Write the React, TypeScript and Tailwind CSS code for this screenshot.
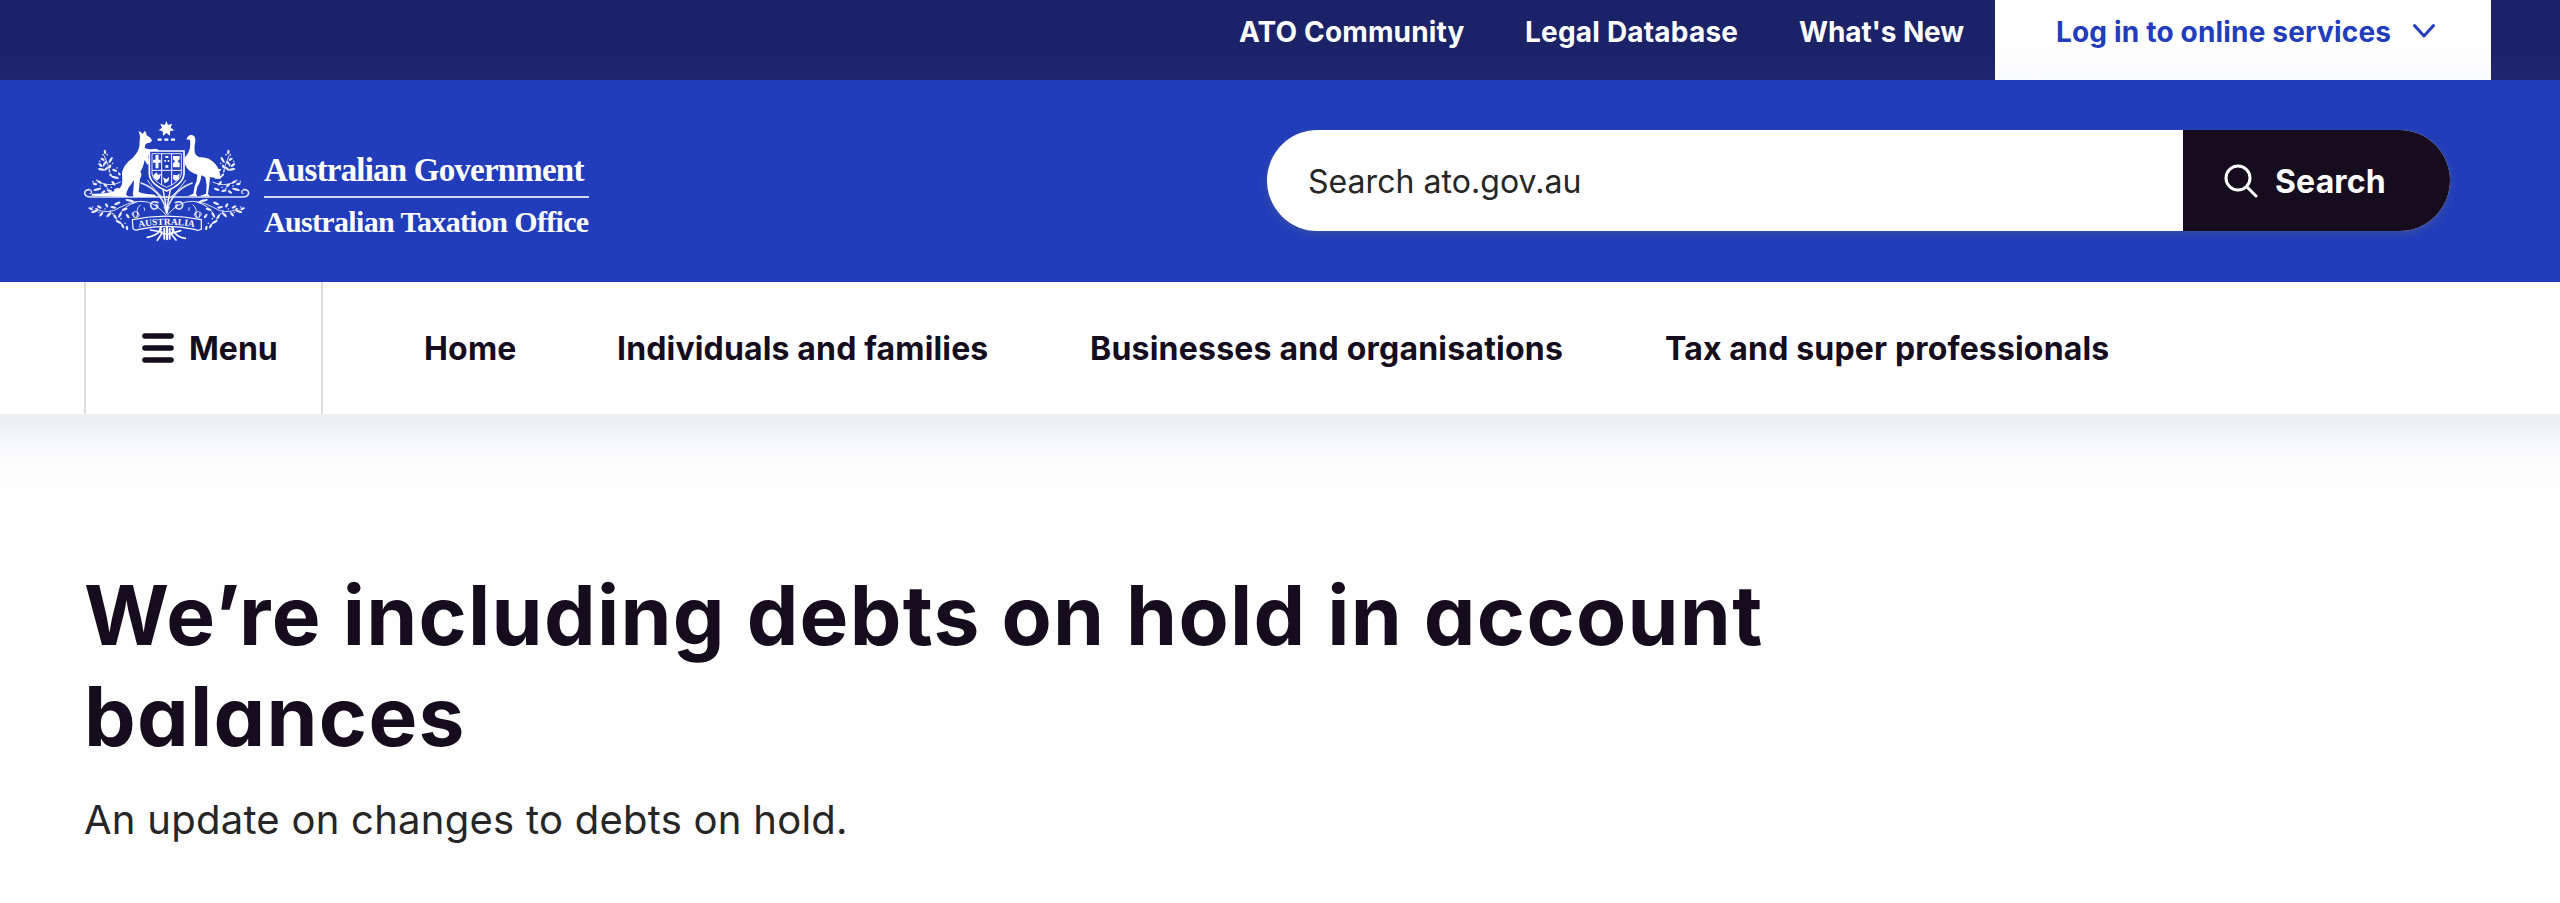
import { ReactNode } from 'react';

const LINKS = [
  { label: 'Home', cls: 'w-[193px] tracking-[0.2px]' },
  { label: 'Individuals and families', cls: 'w-[473px] tracking-[0.16px]' },
  { label: 'Businesses and organisations', cls: 'w-[575px] tracking-[0.22px]' },
  { label: 'Tax and super professionals', cls: 'w-[450px] tracking-[0.16px]' },
];

// [x, y, rotation, length] of each wattle leaf, left half only
const LEAVES: [number, number, number, number][] = [
  [135, 156, 80, 7], [152, 180, -60, 10], [128, 178, 30, 7], [121, 195, 40, 8],
  [135, 190, -50, 8], [124, 208, 10, 10], [139, 206, -40, 8], [150, 199, -70, 6],
  [164, 211, 20, 8], [165, 232, 15, 12], [152, 225, 50, 5], [178, 222, 60, 5],
  [118, 246, 30, 8], [105, 252, 15, 7], [112, 268, -15, 12], [136, 256, 40, 7],
  [130, 276, -30, 7], [148, 272, 10, 8], [160, 250, 50, 8], [170, 268, -20, 9],
  [92, 326, 20, 7], [104, 334, -20, 11], [118, 321, 30, 8], [124, 343, -50, 8],
  [140, 316, 60, 7], [147, 344, -45, 10], [160, 322, 10, 9], [172, 310, -25, 10],
  [165, 350, 60, 8], [180, 345, -60, 9], [176, 366, 30, 10], [188, 378, 60, 8],
  [201, 384, 80, 7], [203, 348, 55, 8], [194, 328, -15, 9], [210, 302, 15, 14],
];

const BERRIES: [number, number][] = [
  [129, 164], [142, 164], [131, 197], [119, 184], [158, 190], [147, 213], [171, 204],
  [110, 241], [99, 245], [121, 258], [142, 265], [154, 262], [98, 321], [111, 326],
  [117, 337], [135, 327], [151, 333], [158, 341], [170, 357], [183, 356], [195, 370],
];

function Foliage() {
  return (
    <g>
      {LEAVES.map(([x, y, angle, rx], i) => (
        <ellipse key={i} cx={x} cy={y} rx={rx} ry={3.6} transform={`rotate(${angle} ${x} ${y})`} fillOpacity={0.9} />
      ))}
      {BERRIES.map(([x, y], i) => (
        <circle key={i} cx={x} cy={y} r={2.5} fillOpacity={0.8} />
      ))}
      <g fill="none" stroke="white" strokeWidth={3} strokeOpacity={0.85}>
        <path d="M132 166 Q146 195 150 218 M116 246 Q150 262 182 246" />
        <path d="M105 326 Q145 346 180 322 Q225 298 262 306 Q292 314 318 345" />
        <path d="M178 346 Q190 318 230 306" />
        <path d="M242 248 Q280 262 300 290 Q316 312 321 340" strokeWidth={5} />
        <path d="M262 240 Q290 280 320 300" strokeWidth={3} />
        <path d="M296 308 Q272 300 272 317 Q276 332 290 325 Q298 316 286 314" strokeWidth={5} />
        <path d="M216 340 q8 -10 18 -2 q8 10 -4 14 q-12 2 -14 -12 M222 352 l-2 -14 M230 352 l4 -16" />
        <path d="M234 346 Q226 326 242 314 M252 322 l2 10" />
        <path d="M91 269 Q74 268 74 280 Q77 292 94 291 L322 291" strokeWidth={5} />
        <path d="M92 270 Q99 280 89 281" strokeWidth={4} />
      </g>
    </g>
  );
}

function Crest() {
  return (
    <svg viewBox="66 60 504 366" className="h-[122px] w-[168px] shrink-0" fill="white">
      {/* star and wreath */}
      <path d="M319 63 L324 75 L336 71 L332 83 L343 91 L330 94 L330 107 L319 99 L309 108 L308 94 L296 91 L306 83 L301 71 L314 75 Z" />
      <path d="M293 119h52" stroke="white" strokeWidth={7} strokeDasharray="12 8" />
      <Foliage />
      <g transform="matrix(-1 0 0 1 640 0)">
        <Foliage />
      </g>
      {/* kangaroo */}
      <path d="M236 93 Q244 96 248 102 L254 92 Q260 98 260 106 Q271 110 276 121 Q273 130 260 130 Q254 134 254 144 Q268 150 280 147 Q292 144 298 152 L272 157 Q264 164 264 172 L270 190 L262 194 L254 180 Q250 202 241 215 Q248 224 240 236 L236 276 Q252 282 284 284 L290 291 L222 290 Q216 284 220 272 L222 240 Q212 254 204 266 L198 283 L206 291 L120 288 L94 287 L96 281 Q152 282 178 266 Q190 256 186 226 Q184 206 206 184 Q232 164 238 140 L240 108 Z" />
      {/* emu */}
      <path d="M379 118 Q384 105 394 104 Q407 106 406 122 Q402 142 404 156 Q406 168 420 172 Q446 170 464 190 Q480 206 482 238 Q466 232 450 232 L448 252 L444 282 L450 289 L418 289 L438 281 L440 256 L436 232 L424 226 Q422 248 412 260 L408 280 L412 289 L384 288 L400 281 L404 258 Q412 244 412 224 Q384 216 376 196 Q368 176 380 166 Q394 148 390 120 Z" />
      {/* shield */}
      <path d="M268 153 H372 V222 Q370 252 320 273 Q270 252 268 222 Z" fill="#213dbc" stroke="white" strokeWidth={5} />
      <path d="M276 161 H364 V222 Q360 246 320 262 Q280 246 276 222 Z" fill="none" stroke="white" strokeWidth={2.5} />
      <path d="M276 211h88 M305 161v50 M335 161v50 M305 211v44 M335 211v44" stroke="white" strokeWidth={3} />
      <path d="M291 165v40 M279 184h23" stroke="white" strokeWidth={9} />
      <path d="M339 168h20v10l-6 6 6 6v12h-20v-12l6-6-6-6z" />
      <path d="M316 168h9v6h-9z M313 180h5v5h-5z M323 180h5v5h-5z M316 196h9v7h-9z" />
      <path d="M280 225 l10 -8 4 8 9 -4 -4 14 -8 7 -10 -8z M309 232 l10 6 9 -8 -3 14 -11 6z M340 224 l12 2 7 -6 -2 16 -10 8 -8 -8z" />
      {/* stem */}
      <path d="M309 270 Q318 310 320 340 Q322 310 331 270" fill="none" stroke="white" strokeWidth={4} />
      <path d="M310 320 L330 320 L320 344 Z" fillOpacity={0.7} />
      {/* ribbon */}
      <path d="M217 359 Q320 338 424 359 V388 Q412 394 404 388 Q320 370 237 388 Q226 394 219 386 Z" fill="#213dbc" stroke="white" strokeWidth={3.5} />
      <path id="ribbon" d="M236 382 Q320 366 408 382" fill="none" />
      <text className="font-['Liberation_Serif'] text-[28px] font-bold">
        <textPath href="#ribbon" textLength={168} lengthAdjust="spacingAndGlyphs">AUSTRALIA</textPath>
      </text>
      <g fill="none" stroke="white" strokeWidth={5} strokeLinecap="round">
        <path d="M262 412 Q290 408 304 388 M272 390 L306 396 M292 421 L306 400 M376 415 Q350 412 336 388 M362 392 L334 400 M348 420 L334 402" />
        <path d="M304 382 q-10 8 0 16 q16 8 32 0 q10 -8 0 -16" />
        <path d="M313 386 v30 M321 382 v36 M329 386 v30" strokeWidth={6} />
      </g>
    </svg>
  );
}

function TopLink({ className, children }: { className: string; children: ReactNode }) {
  return <a className={`${className} shrink-0 whitespace-nowrap text-white`}>{children}</a>;
}

export default function App() {
  return (
    <div className="flex h-[903px] w-[2560px] flex-col overflow-hidden bg-[#fefefe] font-['Inter',sans-serif] text-[#150c1e]">
      <div className="flex h-20 justify-end bg-linear-to-b from-[#1c2268] from-60% to-[#1f266b] pr-[69px] text-[28px] leading-[65px] font-bold">
        <TopLink className="w-[286px] tracking-[0.15px]">ATO Community</TopLink>
        <TopLink className="w-[274px] tracking-[0.2px]">Legal Database</TopLink>
        <TopLink className="w-[196px] tracking-[-0.1px]">What's New</TopLink>
        <div className="flex w-[496px] shrink-0 bg-linear-to-b from-white from-50% to-[#fafbfd] pl-[61px] text-[#213dbc]">
          <span className="w-[356px] whitespace-nowrap tracking-[0.18px]">Log in to online services</span>
          <svg viewBox="0 0 24 18" className="mt-[22px] h-[18px] w-6" fill="none" stroke="currentColor" strokeWidth={3} strokeLinecap="round" strokeLinejoin="round">
            <path d="M2.5 3.5 L12 14 L21.5 3.5" />
          </svg>
        </div>
      </div>

      <header className="flex h-[202px] justify-between bg-[#213dbc] pr-[110px] pl-[82px]">
        <div className="flex pt-10">
          <Crest />
          <div className="ml-[14px] w-[325px] pt-[27px] font-['Liberation_Serif',serif] font-bold whitespace-nowrap text-white">
            <div className="h-[49px] text-[33px] leading-[46px] tracking-[-0.8px]">Australian Government</div>
            <div className="h-[2px] bg-[#d3d8f2]" />
            <div className="text-[30px] leading-[48px] tracking-[-0.66px]">Australian Taxation Office</div>
          </div>
        </div>
        <div className="mt-[50px] flex h-[101px] w-[1183px] overflow-hidden rounded-full bg-white text-[32px] shadow-[0_3px_8px_rgba(80,100,140,0.5)]">
          <div className="w-[916px] pl-[41px] leading-[104px] tracking-[0.05px] text-[#262626]">Search ato.gov.au</div>
          <button className="flex flex-1 items-center bg-[#150c1e] pl-[41px] font-bold text-white">
            <svg viewBox="0 0 34 34" className="mr-[17px] h-[34px] w-[34px]" fill="none" stroke="currentColor" strokeWidth={3} strokeLinecap="round">
              <circle cx={14} cy={14} r={12} />
              <path d="M23 23 L32 32" />
            </svg>
            <span className="pt-[2px] tracking-[0.15px]">Search</span>
          </button>
        </div>
      </header>

      <nav className="flex h-[132px] bg-white pl-[84px] text-[32px] leading-[133px] font-bold">
        <div className="flex w-[239px] items-center border-r-2 border-l-2 border-[#dcdcde] pl-[56px]">
          <svg viewBox="0 0 32 30" className="mr-[15px] h-[30px] w-8" stroke="currentColor" strokeWidth={5.6} strokeLinecap="round">
            <path d="M3 3h26M3 15h26M3 27h26" />
          </svg>
          Menu
        </div>
        <div className="flex pl-[101px]">
          {LINKS.map(link => (
            <a key={link.label} className={`${link.cls} shrink-0 whitespace-nowrap`}>{link.label}</a>
          ))}
        </div>
      </nav>

      <main className="flex-1 bg-[linear-gradient(to_bottom,#ebeff2_0px,#eff2f5_14px,#f8f9fb_32px,#fdfdfe_50px,#fefefe_70px)] pt-[151px] pl-[84px]">
        <h1 className="text-[82px] leading-[101px] font-[660] tracking-[1.3px] whitespace-nowrap [font-feature-settings:'cv11']">
          <span className="block">We’re including debts on hold in account</span>
          <span className="block">balances</span>
        </h1>
        <p className="mt-[27px] text-[40px] leading-[52px] tracking-[0.26px] text-[#262626]">An update on changes to debts on hold.</p>
      </main>
    </div>
  );
}
